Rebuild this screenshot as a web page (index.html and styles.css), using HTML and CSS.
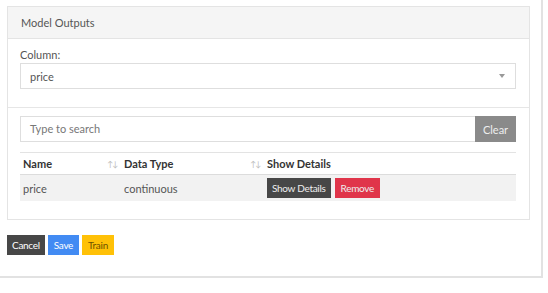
FILE: index.html
```html
<!DOCTYPE html>
<html>
<head>
<meta charset="utf-8">
<link rel="stylesheet" href="styles.css">
</head>
<body>
<div class="outer">
  <div class="card">
    <div class="card-header">Model Outputs</div>
    <div class="section">
      <div class="label">Column:</div>
      <div class="select">
        <span>price</span>
        <span class="caret"></span>
      </div>
    </div>
    <div class="section2">
      <div class="search">
        <div class="search-input">Type to search</div>
        <div class="btn-clear">Clear</div>
      </div>
      <div class="table">
        <div class="thead">
          <div class="th c1"><span>Name</span><span class="sort">↑↓</span></div>
          <div class="th c2"><span>Data Type</span><span class="sort">↑↓</span></div>
          <div class="th c3"><span>Show Details</span></div>
        </div>
        <div class="row">
          <div class="td c1">price</div>
          <div class="td c2">continuous</div>
          <div class="td c3">
            <span class="btn btn-dark">Show Details</span>
            <span class="btn btn-red">Remove</span>
          </div>
        </div>
      </div>
    </div>
  </div>
  <div class="actions">
    <span class="abtn cancel">Cancel</span>
    <span class="abtn save">Save</span>
    <span class="abtn train">Train</span>
  </div>
</div>
</body>
</html>
```
FILE: styles.css
```css
html, body {
  margin: 0;
  padding: 0;
  background: #fff;
}
body {
  font-family: Lato, "Liberation Sans", sans-serif;
  font-size: 11px;
  color: #555;
}
.outer {
  width: 534px;
  height: 270px;
  padding: 6px 0 0 7px;
  border-right: 2px solid #e2e2e2;
  border-bottom: 2px solid #e2e2e2;
}
.card {
  width: 521px;
  border: 1px solid #e4e4e4;
}
.card-header {
  height: 31px;
  line-height: 31px;
  padding: 0 13px;
  background: #f5f5f5;
  border-bottom: 1px solid #e4e4e4;
  color: #555;
}
.section {
  padding: 8px 13px 18px 12px;
  border-bottom: 1px solid #e6e6e6;
}
.label {
  height: 15px;
  line-height: 15px;
  color: #555;
}
.select {
  margin-top: 1px;
  height: 24px;
  border: 1px solid #dedede;
  display: flex;
  align-items: center;
  justify-content: space-between;
  padding: 0 9px;
}
.caret {
  width: 0;
  height: 0;
  border-left: 3.5px solid transparent;
  border-right: 3.5px solid transparent;
  border-top: 4px solid #999;
  margin-right: 1px;
}
.section2 {
  padding: 8px 13px 18px 12px;
}
.search {
  display: flex;
  height: 26px;
}
.search-input {
  flex: 1;
  border: 1px solid #dedede;
  border-right: none;
  padding: 0 9px;
  line-height: 24px;
  color: #777;
}
.btn-clear {
  width: 41px;
  background: #8a8a8a;
  color: #eee;
  display: flex;
  align-items: center;
  justify-content: center;
}
.table {
  margin-top: 10px;
  border-top: 1px solid #e3e3e3;
}
.thead {
  display: flex;
  height: 21px;
  border-bottom: 1px solid #dcdcdc;
  font-weight: bold;
  color: #333;
  align-items: center;
}
.th {
  display: flex;
  justify-content: space-between;
  align-items: center;
  padding: 0 4px 0 3px;
  box-sizing: border-box;
}
.sort {
  font-weight: normal;
  font-size: 8px;
  color: #bbb;
  letter-spacing: -1px;
}
.c1 { width: 101px; }
.c2 { width: 143px; padding-left: 3px; }
.c3 { flex: 1; padding-left: 3px; }
.row {
  display: flex;
  height: 26px;
  background: #f2f2f2;
  align-items: center;
}
.td {
  box-sizing: border-box;
  padding-left: 3px;
  color: #555;
}
.row .c3 {
  display: flex;
  gap: 4px;
}
.btn {
  height: 20px;
  line-height: 20px;
  padding: 0 5px;
  font-size: 10px;
  letter-spacing: -0.3px;
  color: #eee;
}
.btn-dark { background: #474747; }
.btn-red { background: #e0354a; padding: 0 6px; }
.actions {
  margin-top: 15px;
  display: flex;
  gap: 3px;
}
.abtn {
  height: 20px;
  line-height: 20px;
  font-size: 10px;
  letter-spacing: -0.3px;
  padding: 0 5px;
  color: #fff;
}
.cancel { background: #474747; }
.save { background: #428bf3; padding: 0 6px; }
.train { background: #ffc107; color: #6b5200; padding: 0 6px; }
```
